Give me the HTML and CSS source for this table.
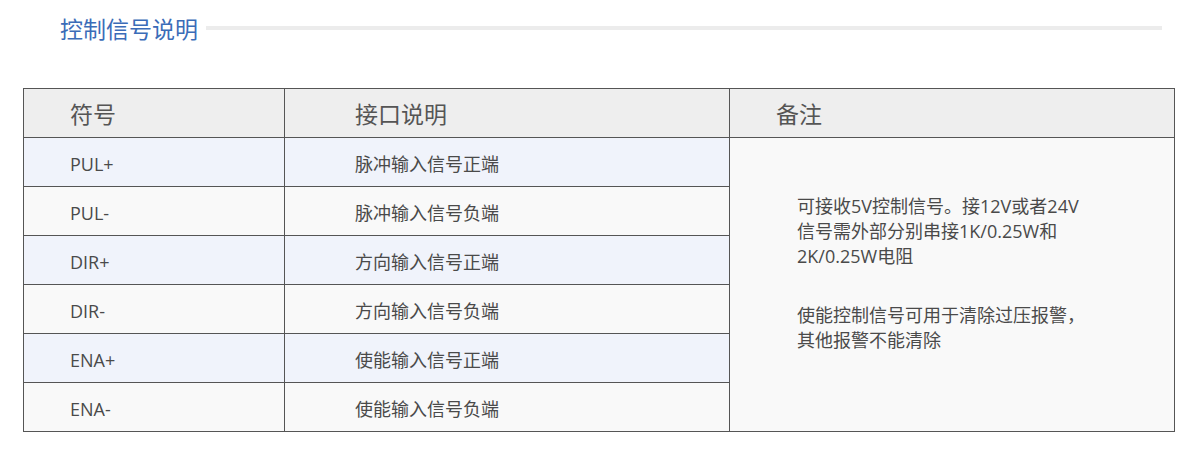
FILE: index.html
```html
<!DOCTYPE html>
<html lang="zh-CN">
<head>
<meta charset="utf-8">
<title>控制信号说明</title>
<link rel="stylesheet" href="styles.css">
</head>
<body>
<div class="page">
  <div class="title-bar">
    <h2 class="title">控制信号说明</h2>
    <div class="title-line"></div>
  </div>
  <table class="sig-table">
    <colgroup>
      <col class="c1">
      <col class="c2">
      <col class="c3">
    </colgroup>
    <thead>
      <tr>
        <th class="pad1">符号</th>
        <th class="pad2">接口说明</th>
        <th class="pad1">备注</th>
      </tr>
    </thead>
    <tbody>
      <tr class="odd">
        <td class="pad1">PUL+</td>
        <td class="pad2">脉冲输入信号正端</td>
        <td class="remark" rowspan="6">
          <p>可接收5V控制信号。接12V或者24V<br>信号需外部分别串接1K/0.25W和<br>2K/0.25W电阻</p>
          <p>使能控制信号可用于清除过压报警，<br>其他报警不能清除</p>
        </td>
      </tr>
      <tr class="even">
        <td class="pad1">PUL-</td>
        <td class="pad2">脉冲输入信号负端</td>
      </tr>
      <tr class="odd">
        <td class="pad1">DIR+</td>
        <td class="pad2">方向输入信号正端</td>
      </tr>
      <tr class="even">
        <td class="pad1">DIR-</td>
        <td class="pad2">方向输入信号负端</td>
      </tr>
      <tr class="odd">
        <td class="pad1">ENA+</td>
        <td class="pad2">使能输入信号正端</td>
      </tr>
      <tr class="even">
        <td class="pad1">ENA-</td>
        <td class="pad2">使能输入信号负端</td>
      </tr>
    </tbody>
  </table>
</div>
</body>
</html>
```

FILE: styles.css
```css
html, body {
  margin: 0;
  padding: 0;
  background: #ffffff;
}

body {
  font-family: "Open Sans", "Noto Sans CJK SC", sans-serif;
  color: #4a4a4a;
}

.page {
  padding-top: 13px;
}

.title-bar {
  display: flex;
  align-items: center;
  gap: 8px;
  padding-left: 60px;
  padding-right: 38px;
  height: 32px;
}

.title {
  margin: 0;
  font-size: 23px;
  font-weight: normal;
  line-height: 32px;
  color: #3b6cb8;
  white-space: nowrap;
}

.title-line {
  flex: 1;
  height: 4px;
  background: #ececec;
  margin-top: -3px;
}

.sig-table {
  margin-top: 43px;
  margin-left: 23px;
  width: 1151px;
  table-layout: fixed;
  border-collapse: collapse;
  border: 1px solid #555555;
}

.c1 { width: 261px; }
.c2 { width: 445px; }
.c3 { width: 445px; }

.sig-table th,
.sig-table td {
  border: 1px solid #555555;
  text-align: left;
  padding: 0;
}

.sig-table th {
  height: 47px;
  background: #eeeeee;
  font-size: 23px;
  font-weight: normal;
  color: #555555;
  vertical-align: middle;
  padding-top: 1px;
  line-height: 30px;
}

.sig-table td {
  height: 49px;
  font-size: 18px;
  line-height: 25px;
  vertical-align: middle;
  padding-top: 4px;
  box-sizing: border-box;
}

.sig-table .pad1 { padding-left: 46px; }
.sig-table .pad2 { padding-left: 70px; }

.odd td { background: #f0f3fb; }
.even td { background: #f9f9f9; }

.sig-table td.remark {
  background: #f9f9f9;
  vertical-align: top;
  padding: 56px 0 0 67px;
  font-size: 18px;
  line-height: 25px;
}

.remark p {
  margin: 0 0 34px 0;
}
```
